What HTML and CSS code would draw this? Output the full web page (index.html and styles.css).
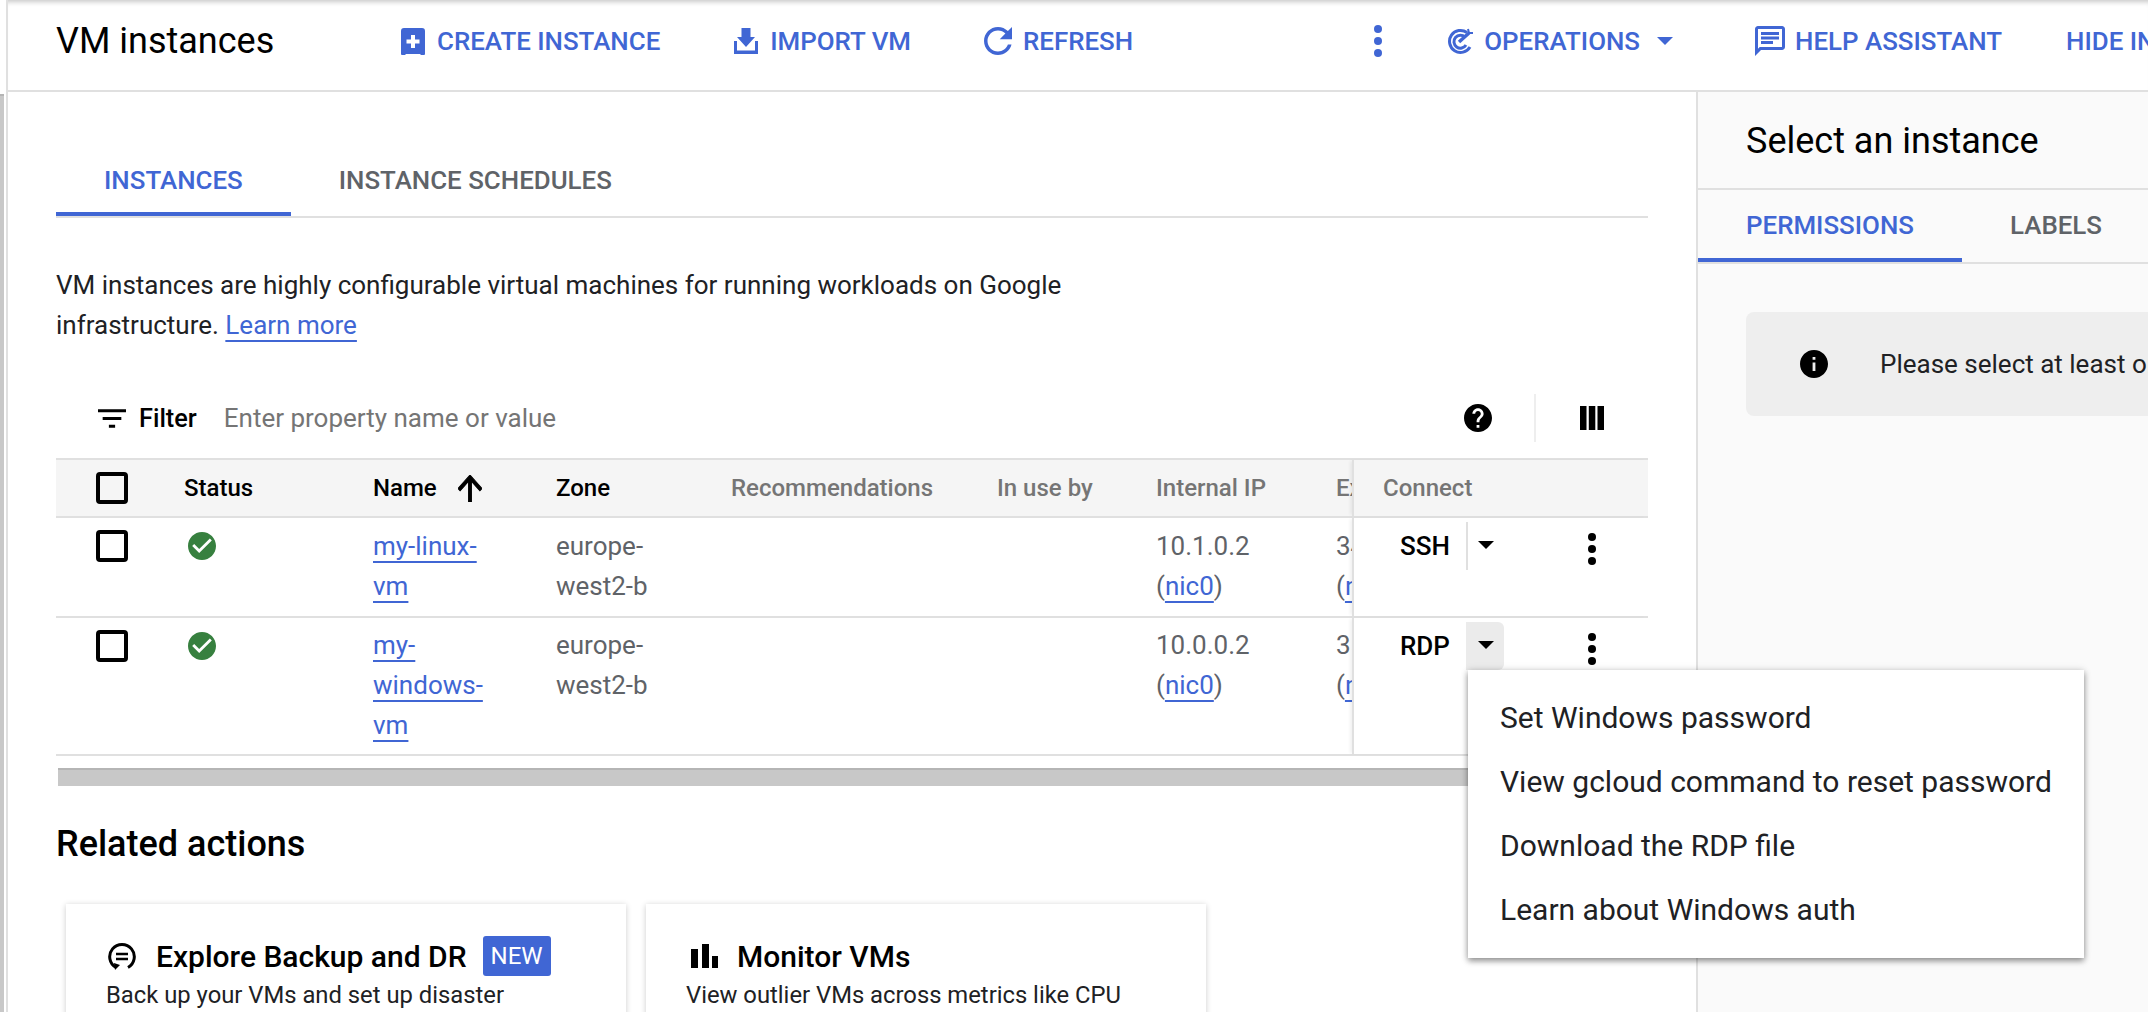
FILE: index.html
```html
<!DOCTYPE html>
<html lang="en">
<head>
<meta charset="utf-8">
<title>VM instances</title>
<link rel="stylesheet" href="styles.css">
</head>
<body>
<div class="page">
  <div class="rail"><div class="rail-bar"></div></div>
  <div class="app">
    <header class="topbar">
      <h1 class="page-title">VM instances</h1>
      <a class="action act-create"><svg class="ic" width="24" height="27" viewBox="0 0 24 27"><path fill="currentColor" d="M3 0h18a3 3 0 0 1 3 3v23a1 1 0 0 1-1 1h-3l-1-1H5l-1 1H1a1 1 0 0 1-1-1V3a3 3 0 0 1 3-3z"/><path fill="#fff" d="M10 7h4v4.500h4.500v4H14V20h-4v-4.500H5.500v-4H10z"/></svg>CREATE INSTANCE</a>
      <a class="action act-import"><svg class="ic" width="24" height="26" viewBox="0 0 24 26"><path fill="currentColor" d="M7.500 0h9v9H21L12 19 3 9h4.500zM0 13h3v9.500h18V13h3v13H0z"/></svg>IMPORT VM</a>
      <a class="action act-refresh"><svg class="ic" width="28" height="28" viewBox="4 4 16 16"><path fill="currentColor" d="M17.650 6.350C16.200 4.900 14.210 4 12 4c-4.420 0-7.990 3.580-7.990 8s3.570 8 7.990 8c3.730 0 6.840-2.550 7.730-6h-2.080c-.82 2.330-3.040 4-5.650 4-3.310 0-6-2.690-6-6s2.690-6 6-6c1.660 0 3.140.69 4.220 1.780L13 11h7V4l-2.350 2.350z"/></svg>REFRESH</a>
      <svg class="top-kebab" width="8" height="32" viewBox="0 0 8 32"><circle cx="4" cy="4" r="4" fill="currentColor"/><circle cx="4" cy="16" r="4" fill="currentColor"/><circle cx="4" cy="28" r="4" fill="currentColor"/></svg>
      <a class="action act-ops"><svg class="ic" width="26" height="26" viewBox="0 0 26 26" fill="none" stroke="currentColor" stroke-width="3"><path d="M20 4.500A11 11 0 1 0 23 19"/><path d="M18 9A6.500 6.500 0 1 0 19 17"/><path d="M12 14l10-9" stroke-width="3.500"/><path d="M21 1l1 4 4 0" stroke-width="2"/></svg>OPERATIONS<svg class="op-caret" width="16" height="8" viewBox="0 0 16 8"><path fill="currentColor" d="M0 0h16L8 8z"/></svg></a>
      <a class="action act-help"><svg class="ic" width="30" height="30" viewBox="2 2 20 20"><path fill="currentColor" d="M20 2H4c-1.100 0-1.990.9-1.990 2L2 22l4-4h14c1.100 0 2-.9 2-2V4c0-1.100-.9-2-2-2zm0 14H5.170L4 17.170V4h16v12zM6 12h8v2H6zm0-3h12v2H6zm0-3h12v2H6z"/></svg>HELP ASSISTANT</a>
      <a class="action act-hide">HIDE INFO PANEL</a>
    </header>
    <div class="body-row">
      <main class="content">
        <nav class="tabs">
          <a class="tab tab-on">INSTANCES</a>
          <a class="tab">INSTANCE SCHEDULES</a>
        </nav>
        <p class="intro">VM instances are highly configurable virtual machines for running workloads on Google infrastructure. <a class="link">Learn more</a></p>
        <div class="filter">
          <svg class="filter-ic" width="28" height="19" viewBox="3 6 18 12"><path d="M10 18h4v-2h-4v2zM3 6v2h18V6H3zm3 7h12v-2H6v2z"/></svg>
          <span class="filter-label">Filter</span>
          <span class="filter-hint">Enter property name or value</span>
          <svg class="help-ic" width="28" height="28" viewBox="2 2 20 20"><path d="M12 2C6.480 2 2 6.480 2 12s4.480 10 10 10 10-4.480 10-10S17.520 2 12 2zm1 17h-2v-2h2v2zm2.070-7.750l-.9.920C13.450 12.900 13 13.500 13 15h-2v-.5c0-1.100.45-2.100 1.170-2.830l1.240-1.260c.37-.36.59-.86.59-1.410 0-1.100-.9-2-2-2s-2 .9-2 2H8c0-2.210 1.790-4 4-4s4 1.790 4 4c0 .88-.36 1.680-.93 2.250z"/></svg>
          <span class="filter-div"></span>
          <svg class="cols-ic" width="24" height="24" viewBox="0 0 24 24"><path d="M0 0h6.500v24H0zM8.800 0h6.500v24H8.800zM17.500 0H24v24h-6.500z"/></svg>
        </div>
        <div class="table">
          <div class="tr th">
            <div class="td"><span class="cbox"></span></div>
            <div class="td strong">Status</div>
            <div class="td strong">Name<svg class="sort" width="24" height="27" viewBox="4 4 16 16" preserveAspectRatio="none"><path d="M4 12l1.410 1.410L11 7.830V20h2V7.830l5.580 5.590L20 12l-8-8-8 8z"/></svg></div>
            <div class="td strong">Zone</div>
            <div class="td">Recommendations</div>
            <div class="td">In use by</div>
            <div class="td">Internal IP</div>
            <div class="td clip">External IP</div>
            <div class="td sticky"><span class="conn-head">Connect</span></div>
          </div>
          <div class="tr tr-two">
            <div class="td"><span class="cbox"></span></div>
            <div class="td"><svg class="ok" width="28" height="28" viewBox="2 2 20 20"><path d="M12 2C6.480 2 2 6.480 2 12s4.480 10 10 10 10-4.480 10-10S17.520 2 12 2zm-2 15l-5-5 1.410-1.410L10 14.170l7.590-7.590L19 8l-9 9z"/></svg></div>
            <div class="td name-cell"><a class="link">my-linux-vm</a></div>
            <div class="td zone-cell">europe-west2-b</div>
            <div class="td"></div>
            <div class="td"></div>
            <div class="td">10.1.0.2<br>(<a class="link">nic0</a>)</div>
            <div class="td clip">34.105.0.1<br>(<a class="link">nic0</a>)</div>
            <div class="td sticky conn">
              <span class="conn-label">SSH</span>
              <span class="split split-line"><svg width="16" height="8" viewBox="0 0 16 8"><path d="M0 0h16L8 8z"/></svg></span>
              <svg class="kebab" width="8" height="32" viewBox="0 0 8 32"><circle cx="4" cy="4" r="4"/><circle cx="4" cy="16" r="4"/><circle cx="4" cy="28" r="4"/></svg>
            </div>
          </div>
          <div class="tr">
            <div class="td"><span class="cbox"></span></div>
            <div class="td"><svg class="ok" width="28" height="28" viewBox="2 2 20 20"><path d="M12 2C6.480 2 2 6.480 2 12s4.480 10 10 10 10-4.480 10-10S17.520 2 12 2zm-2 15l-5-5 1.410-1.410L10 14.170l7.590-7.590L19 8l-9 9z"/></svg></div>
            <div class="td name-cell raised"><a class="link">my-windows-vm</a></div>
            <div class="td zone-cell raised">europe-west2-b</div>
            <div class="td"></div>
            <div class="td"></div>
            <div class="td raised">10.0.0.2<br>(<a class="link">nic0</a>)</div>
            <div class="td clip raised">35.189.0.2<br>(<a class="link">nic0</a>)</div>
            <div class="td sticky conn">
              <span class="conn-label">RDP</span>
              <span class="split split-on"><svg width="16" height="8" viewBox="0 0 16 8"><path d="M0 0h16L8 8z"/></svg></span>
              <svg class="kebab" width="8" height="32" viewBox="0 0 8 32"><circle cx="4" cy="4" r="4"/><circle cx="4" cy="16" r="4"/><circle cx="4" cy="28" r="4"/></svg>
            </div>
          </div>
        </div>
        <div class="hscroll"></div>
        <h2 class="related">Related actions</h2>
        <div class="cards">
          <section class="card">
            <div class="card-head">
              <svg class="card-ic" width="28" height="28" viewBox="0 0 28 28" fill="none" stroke="#000" stroke-width="3"><path d="M8 25.500A12.300 12.300 0 1 1 20 25.500"/><path d="M8 12h12M8 17h12" stroke-width="2.500"/><path fill="#000" stroke="none" d="M6 21l6 2-5 5z"/></svg>
              <span class="card-title">Explore Backup and DR</span>
              <span class="badge">NEW</span>
            </div>
            <p class="card-text">Back up your VMs and set up disaster recovery plans for your workloads</p>
          </section>
          <section class="card">
            <div class="card-head">
              <svg class="card-ic card-ic-bars" width="27" height="24" viewBox="0 0 27 24"><path d="M0 5h7v19H0zM11 0h7v24h-7zM21 12h6v12h-6z"/></svg>
              <span class="card-title">Monitor VMs</span>
            </div>
            <p class="card-text">View outlier VMs across metrics like CPU and network traffic</p>
          </section>
        </div>
      </main>
      <aside class="panel">
        <div class="panel-title">Select an instance</div>
        <nav class="panel-tabs">
          <a class="tab tab-on ptab">PERMISSIONS</a>
          <a class="tab ptab">LABELS</a>
        </nav>
        <div class="notice">
          <svg class="notice-ic" width="28" height="28" viewBox="2 2 20 20"><path d="M12 2C6.480 2 2 6.480 2 12s4.480 10 10 10 10-4.480 10-10S17.520 2 12 2zm1 15h-2v-6h2v6zm0-8h-2V7h2v2z"/></svg>
          <span>Please select at least one resource.</span>
        </div>
      </aside>
    </div>
  </div>
  <ul class="menu">
    <li>Set Windows password</li>
    <li>View gcloud command to reset password</li>
    <li>Download the RDP file</li>
    <li>Learn about Windows auth</li>
  </ul>
</div>
</body>
</html>
```
FILE: styles.css
```css
* { box-sizing: border-box; }
html, body { margin: 0; height: 100%; overflow: hidden; }
body { font-family: Roboto, "Liberation Sans", sans-serif; color: #000; background: #fff; }
a { color: inherit; text-decoration: none; }
h1, h2, p, ul { margin: 0; padding: 0; }
svg { display: block; flex: none; }

.page { position: relative; display: flex; width: 2148px; height: 1012px; overflow: hidden; }
.rail { flex: 0 0 8px; border-right: 2px solid #e0e0e0; padding-top: 94px; }
.rail-bar { width: 4px; height: 100%; background: #c8c8c8; border-top: 2px solid #b5b5b5; }
.app { flex: 1; min-width: 0; display: flex; flex-direction: column; }

.topbar { flex: 0 0 92px; display: flex; align-items: center; padding: 0 0 8px 48px; border-bottom: 2px solid #e0e0e0; white-space: nowrap; overflow: hidden; box-shadow: inset 0 6px 5px -4px rgba(0,0,0,.22); }
.page-title { flex: none; font-size: 36px; font-weight: 400; line-height: 40px; width: 345px; }
.action { flex: none; display: flex; align-items: center; color: #4066d4; font-size: 25.900px; font-weight: 500; }
.action .ic { margin-right: 12px; }
.act-import { margin-left: 74px; }
.act-refresh { margin-left: 73px; }
.act-refresh .ic { margin-right: 11px; }
.top-kebab { color: #4066d4; margin-left: 241px; }
.act-ops { margin-left: 65px; }
.act-ops .ic { margin-right: 11px; }
.op-caret { margin-left: 17px; }
.act-help { margin-left: 82px; }
.act-help .ic { margin-right: 10px; }
.act-hide { margin-left: 64px; }

.body-row { flex: 1; min-height: 0; display: flex; }
.content { flex: 0 0 1688px; padding: 50px 48px 0; overflow: hidden; }

.tabs { display: flex; border-bottom: 2px solid #e0e0e0; height: 76px; }
.tab { display: block; height: 74px; padding: 21px 48px 15px; font-size: 25.900px; line-height: 34px; font-weight: 500; color: #5f6368; border-bottom: 4px solid transparent; white-space: nowrap; }
.tab-on { color: #4066d4; border-bottom-color: #4066d4; }

.intro { margin-top: 47px; max-width: 1060px; font-size: 26px; line-height: 40px; color: #202124; }
.link { color: #4066d4; text-decoration: underline; text-decoration-thickness: 2px; text-underline-offset: 6px; }

.filter { margin-top: 49px; height: 48px; display: flex; align-items: center; padding-left: 42px; }
.filter-label { margin-left: 13px; font-size: 25.300px; font-weight: 500; }
.filter-hint { margin-left: 27px; font-size: 26px; color: #757575; flex: 1; }
.filter-div { width: 2px; height: 48px; background: #eee; margin: 0 44px 0 42px; }
.cols-ic { margin-right: 44px; }

.table { margin-top: 16px; }
.tr { display: grid; grid-template-columns: 128px 189px 183px 175px 266px 159px 180px 16px 1fr; border-bottom: 2px solid #e0e0e0; font-size: 26px; line-height: 40px; color: #5f6368; }
.tr-two { min-height: 100px; }
.td { padding: 8px 0; min-width: 0; }
.td.raised { padding-top: 7px; padding-bottom: 9px; }
.td:first-child { padding: 12px 0 0 40px; }
.th { height: 60px; border-top: 2px solid #e0e0e0; background: #f5f5f5; font-size: 24px; font-weight: 500; color: #757575; }
.th .td { display: flex; align-items: center; padding: 0; }
.th .td:first-child { padding: 0 0 0 40px; }
.strong { color: #000; }
.cbox { display: block; width: 32px; height: 32px; border: 4px solid #000; border-radius: 4px; }
.sort { margin-left: 21px; stroke: #000; stroke-width: .6; }
.ok { fill: #37803f; margin: 6px 0 0 4px; }
.name-cell { padding-right: 58px; }
.zone-cell { padding-right: 60px; }
.clip { overflow: hidden; white-space: nowrap; }
.sticky { background: #fff; border-left: 2px solid #e0e0e0; box-shadow: -3px 0 3px -1px rgba(0,0,0,.06); }
.th .sticky { background: #f5f5f5; padding-left: 29px; }
.conn-head { color: #757575; }
.conn { display: flex; align-items: flex-start; padding-left: 46px; padding-top: 8px; color: #000; font-weight: 500; }
.conn-label { width: 66px; }
.split { display: flex; width: 38px; height: 48px; margin-top: -4px; padding: 19px 0 0 12px; }
.split-line { border-left: 2px solid #e0e0e0; padding-left: 10px; }
.split-on { background: #ebebeb; border-radius: 0 6px 6px 0; }
.kebab { margin: 7px 0 0 84px; }

.hscroll { margin-top: 12px; height: 18px; margin-left: 2px; background: #c8c8c8; border-top: 2px solid #b5b5b5; }

.related { margin-top: 38px; font-size: 36px; line-height: 40px; font-weight: 500; }
.cards { margin: 40px 0 0 10px; display: flex; gap: 20px; }
.card { flex: 0 0 560px; height: 200px; padding: 32px 40px 0; background: #fff; box-shadow: 0 1px 6px rgba(0,0,0,.2); }
.card-head { display: flex; align-items: center; height: 40px; }
.card-ic { margin-left: 2px; margin-right: 20px; }
.card-ic-bars { margin-left: 5px; margin-right: 19px; }
.card-title { font-size: 30px; font-weight: 500; white-space: nowrap; }
.badge { margin-left: 16px; height: 40px; padding: 0 8px; background: #4066d4; color: #fff; font-size: 24px; line-height: 40px; border-radius: 3px; }
.card-text { margin-top: 1px; max-width: 450px; font-size: 23.800px; line-height: 36px; color: #202124; }

.panel { flex: 1; min-width: 0; background: #fafafa; border-left: 2px solid #e0e0e0; overflow: hidden; white-space: nowrap; }
.panel-title { height: 98px; padding: 29px 0 0 48px; font-size: 36px; line-height: 40px; border-bottom: 2px solid #e0e0e0; }
.panel-tabs { display: flex; height: 74px; border-bottom: 2px solid #e0e0e0; }
.ptab { height: 72px; padding: 18px 48px 0; }
.notice { margin: 48px 0 0 48px; width: 800px; height: 104px; display: flex; align-items: center; padding-left: 54px; background: #eee; border-radius: 8px; font-size: 26px; color: #202124; }
.notice-ic { margin-right: 52px; }

.menu { position: absolute; left: 1468px; top: 670px; width: 616px; padding: 16px 0; list-style: none; background: #fff; box-shadow: 0 3px 6px rgba(0,0,0,.4), 0 0 8px rgba(0,0,0,.12); }
.menu li { height: 64px; line-height: 64px; padding-left: 32px; font-size: 30px; color: #202124; white-space: nowrap; }
```
